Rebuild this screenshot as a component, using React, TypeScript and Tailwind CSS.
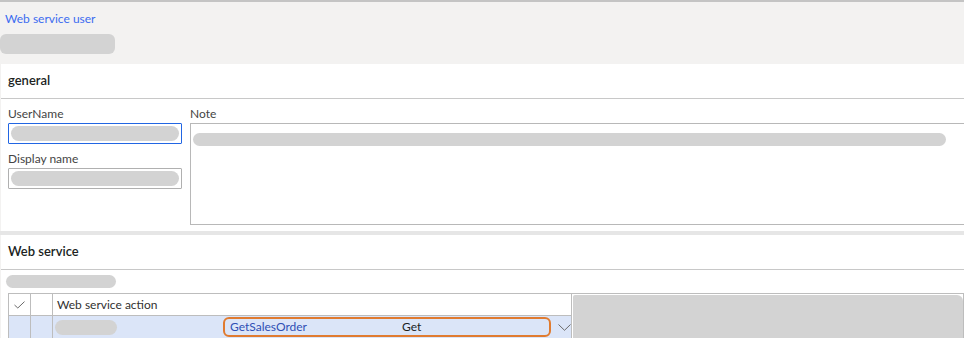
import React from "react";

const Pill = ({ className }: { className: string }) => (
  <div className={`rounded-full bg-[#d3d3d3] ${className}`} />
);

const Check = () => (
  <svg width="11" height="8" viewBox="0 0 11 8" fill="none">
    <path d="M0.5 4 L3.8 7 L10.5 0.6" stroke="#6b6b6b" strokeWidth="1" />
  </svg>
);

const Chevron = () => (
  <svg width="13" height="7" viewBox="0 0 13 7" fill="none">
    <path d="M0.5 0.5 L6.5 6.3 L12.5 0.5" stroke="#6b6b6b" strokeWidth="1" />
  </svg>
);

export default function App() {
  return (
    <div
      className="w-[964px] h-[338px] overflow-hidden bg-[#f3f2f1] border-t-2 border-[#c4c4c4] text-[#323130]"
      style={{ fontFamily: 'Lato, "Noto Sans", sans-serif' }}
    >
      {/* Title area */}
      <div className="h-[62px] pl-[5px] pt-[9px]">
        <div className="text-[12px] leading-[16px] text-[#3c6cf0]">Web service user</div>
        <div className="mt-[7px] -ml-[5px] w-[115px] h-[20px] rounded-[6px] bg-[#d3d3d3]" />
      </div>

      {/* General panel */}
      <div className="ml-[1px] bg-white">
        <div className="h-[35px] border-b border-[#c8c8c8] pl-[7px] flex items-center text-[13px] font-semibold text-[#201f1e]">
          general
        </div>
        <div className="flex gap-[8px] pl-[7px] pt-[6px] pb-[6px]">
          <div className="w-[174px] flex flex-col">
            <div className="h-[18px] text-[12px] leading-[18px] text-[#444]">UserName</div>
            <div className="h-[21px] border border-[#2266e3] rounded-[1px] px-[2px] pt-[2px]">
              <Pill className="h-[15px] w-full" />
            </div>
            <div className="mt-[6px] h-[18px] text-[12px] leading-[18px] text-[#444]">Display name</div>
            <div className="h-[21px] border border-[#b0b0b0] rounded-[1px] px-[2px] pt-[2px]">
              <Pill className="h-[15px] w-full" />
            </div>
          </div>
          <div className="flex-1 flex flex-col">
            <div className="h-[18px] text-[12px] leading-[18px] text-[#444]">Note</div>
            <div className="h-[102px] border border-[#b8b8b8] pl-[2px] pt-[9px] -mr-[2px]">
              <Pill className="h-[13px] w-[753px]" />
            </div>
          </div>
        </div>
      </div>

      {/* gap */}
      <div className="h-[4px] bg-[#e6e6e6]" />

      {/* Web service panel */}
      <div className="ml-[1px] bg-white h-[200px]">
        <div className="h-[35px] border-b border-[#c8c8c8] pl-[7px] flex items-center text-[13px] font-semibold text-[#201f1e]">
          Web service
        </div>
        <div className="pl-[5px] pt-[5px]">
          <Pill className="h-[13px] w-[110px]" />
        </div>
        <div className="mt-[5px] ml-[7px] border-t border-[#bdbdbd] flex">
          <div className="w-[564px] border-l border-[#bdbdbd]">
            {/* header row */}
            <div className="flex h-[21px]">
              <div className="w-[22px] border-r border-[#bdbdbd] flex items-center justify-center">
                <Check />
              </div>
              <div className="w-[22px] border-r border-[#bdbdbd]" />
              <div className="flex-1 border-r border-[#bdbdbd] pl-[4px] text-[12px] leading-[21px] text-[#323130]">
                Web service action
              </div>
            </div>
            {/* data row */}
            <div className="flex h-[23px] bg-[#dbe5f8] border-t border-[#bdbdbd]">
              <div className="w-[22px] border-r border-[#bdbdbd]" />
              <div className="w-[22px] border-r border-[#bdbdbd]" />
              <div className="flex-1 border-r border-[#bdbdbd] flex items-center pl-[2px]">
                <Pill className="h-[15px] w-[62px]" />
                <div className="ml-[106px] w-[328px] h-[20px] border-2 border-[#e07b30] rounded-[6px] flex items-center text-[12px]">
                  <span className="pl-[5px] w-[177px] text-[#2f4fb5]">GetSalesOrder</span>
                  <span className="text-[#201f1e]">Get</span>
                </div>
                <div className="ml-[7px]">
                  <Chevron />
                </div>
              </div>
            </div>
          </div>
          <div className="flex-1 border-r border-[#bdbdbd] pl-[1px] pt-[1px]">
            <div className="h-[44px] bg-[#d3d3d3] rounded-tr-[6px] rounded-tl-[2px]" />
          </div>
        </div>
      </div>
    </div>
  );
}
